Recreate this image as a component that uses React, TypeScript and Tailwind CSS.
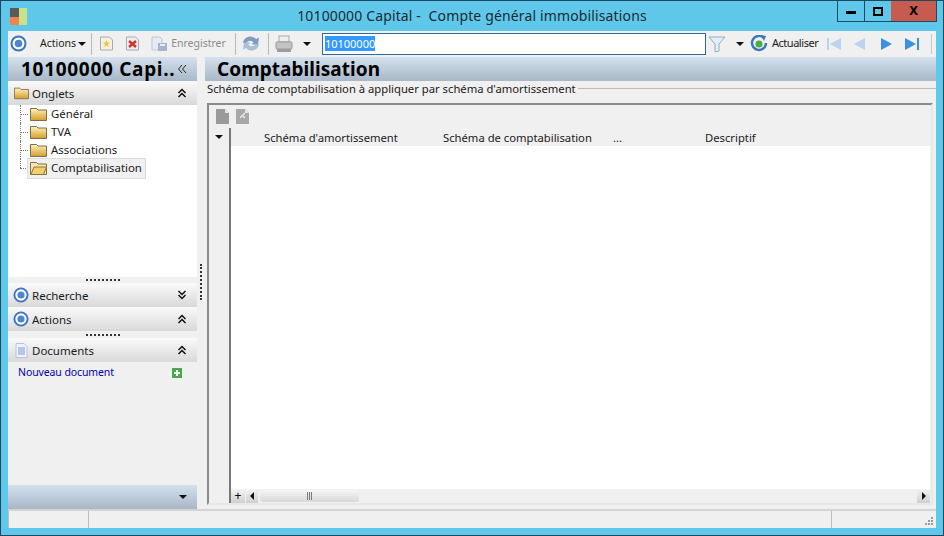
import React from "react";

const font = { fontFamily: '"Noto Sans", "Open Sans", sans-serif' };

const Target = ({ size = 17 }: { size?: number }) => (
  <svg width={size} height={size} viewBox="0 0 17 17" className="shrink-0">
    <circle cx="8.5" cy="8.5" r="7" fill="#fff" stroke="#3f74b8" strokeWidth="2" />
    <circle cx="8.5" cy="8.5" r="3.8" fill="#4a86cf" />
  </svg>
);

const Folder = ({ open = false, large = false }: { open?: boolean; large?: boolean }) => (
  <svg width={large ? 15 : 17} height="14" viewBox="0 0 17 14" className="shrink-0">
    <defs>
      <linearGradient id="fg" x1="0" y1="0" x2="0" y2="1">
        <stop offset="0" stopColor="#fff3b8" />
        <stop offset="1" stopColor="#d79c2c" />
      </linearGradient>
    </defs>
    <path d="M.5 13.5V1.5h6L8 3h8.5v10.5z" fill={open ? "#f7e7ae" : "url(#fg)"} stroke="#7b6f50" strokeWidth="1" />
    {open && <path d="M.8 13.5 4 6h12.5l-3 7.5z" fill="#f4cf6b" stroke="#8b7440" strokeWidth="1" />}
  </svg>
);

const Chev = ({ up = true }: { up?: boolean }) => (
  <svg width="10" height="10" viewBox="0 0 10 10" className="shrink-0">
    <path
      d={up ? "M1.5 5 5 1.5 8.5 5M1.5 9 5 5.5 8.5 9" : "M1.5 1 5 4.5 8.5 1M1.5 5 5 8.5 8.5 5"}
      fill="none"
      stroke="#111"
      strokeWidth="1.5"
    />
  </svg>
);

const Caret = ({ className = "" }: { className?: string }) => (
  <svg width="8" height="4" viewBox="0 0 8 4" className={"shrink-0 " + className}>
    <path d="M0 0h8L4 4z" fill="#111" />
  </svg>
);

const Sep = () => <div className="h-[22px] w-px bg-[#b9b9b9] mx-[4px] shrink-0" />;

const Grip = ({ tall = false }: { tall?: boolean }) => (
  <div className={(tall ? "h-[7px]" : "h-[6px]") + " shrink-0 flex justify-center items-center bg-[#f0f0f0] gap-[2px]"}>
    {Array.from({ length: 9 }).map((_, i) => (
      <span key={i} className="w-[2px] h-[2px] bg-[#333]" />
    ))}
  </div>
);

const SectionHeader = ({
  icon,
  label,
  up = true,
}: {
  icon: React.ReactNode;
  label: string;
  up?: boolean;
}) => (
  <div className="h-[24px] flex items-center pl-[4px] pr-[10px] bg-gradient-to-b from-[#fafafa] to-[#d9d9d9] shrink-0">
    <div className="w-[18px] flex justify-center">{icon}</div>
    <span className="ml-[2px] pt-[2px] text-[11.5px] text-[#1a1a1a] flex-1">{label}</span>
    <Chev up={up} />
  </div>
);

const TreeRow = ({ label, selected = false, last = false }: { label: string; selected?: boolean; last?: boolean }) => (
  <div className="h-[18px] flex items-center relative">
    <div className={"absolute left-[12px] top-0 w-0 border-l border-dotted border-[#777] " + (last ? "h-[9px]" : "h-[18px]")} />
    <div className="ml-[12px] w-[8px] border-t border-dotted border-[#777]" />
    <div
      className={
        "h-[19px] flex items-center pl-[2px] pr-[3px] " +
        (selected ? "bg-[#f0f0f0] outline outline-1 outline-[#dcdcdc]" : "")
      }
    >
      <Folder open={selected} />
      <span className="ml-[4px] text-[11.4px] leading-[18px] text-[#1a1a1a]">{label}</span>
    </div>
  </div>
);

const Doc = ({ tone = "#9a9a9a", mark = false }: { tone?: string; mark?: boolean }) => (
  <svg width="13" height="15" viewBox="0 0 13 15" className="shrink-0">
    <path d="M0 0h9l4 4v11H0z" fill={tone} />
    <path d="M9 0l4 4H9z" fill="#e4e4e4" />
    {mark && <path d="M4 9l5-5M9 9 6 6" stroke="#eee" strokeWidth="1.2" />}
  </svg>
);

const Nav = ({ kind, active }: { kind: "first" | "prev" | "next" | "last"; active: boolean }) => {
  const c = active ? "#3d8fe6" : "#b9d4ef";
  return (
    <svg width="16" height="16" viewBox="0 0 16 16" className="shrink-0">
      {kind === "first" && <path d="M1 2h2v12H1zM15 2v12L4 8z" fill={c} />}
      {kind === "prev" && <path d="M13 2v12L2 8z" fill={c} />}
      {kind === "next" && <path d="M3 2v12l11-6z" fill={c} />}
      {kind === "last" && <path d="M1 2v12l11-6zM13 2h2v12h-2z" fill={c} />}
    </svg>
  );
};

export default function App() {
  return (
    <div
      style={font}
      className="w-[944px] h-[536px] overflow-hidden bg-[#5fc8ea] border border-[#1c4a5c] flex flex-col"
    >
      {/* Title bar */}
      <div className="h-[30px] shrink-0 flex items-start relative">
        <div className="ml-[9px] mt-[7px] w-[17px] h-[17px] grid grid-cols-2 grid-rows-2">
          <span className="bg-[#5a5a5a]" />
          <span className="bg-[#c9e28a] row-span-2" />
          <span className="bg-[#f0854a]" />
        </div>
        <div className="flex-1 pl-[80px] text-center text-[14px] tracking-[0.14px] leading-[30px] text-[#1a2a33] whitespace-pre">
          10100000 Capital -  Compte général immobilisations
        </div>
        <div className="flex h-[21px] mr-[6px] border border-t-0 border-[#1c4a5c]">
          <div className="w-[27px] flex items-center justify-center border-r border-[#1c4a5c]">
            <span className="w-[10px] h-[3px] bg-black mt-[2px]" />
          </div>
          <div className="w-[26px] flex items-center justify-center">
            <span className="w-[10px] h-[9px] border-2 border-black" />
          </div>
          <div className="w-[45px] flex items-center justify-center bg-[#c75b50] text-[13px] font-bold text-black">
            X
          </div>
        </div>
      </div>

      {/* Window body */}
      <div className="mx-[7px] mb-[7px] flex-1 flex flex-col bg-[#f0f0f0] min-h-0">
        {/* Toolbar */}
        <div className="h-[25px] shrink-0 flex items-center pl-[2px] text-[10.5px] text-[#1a1a1a]">
          <Target />
          <span className="ml-[13px]">Actions</span>
          <Caret className="ml-[2px]" />
          <div className="ml-[1px]"><Sep /></div>
          <svg width="15" height="15" viewBox="0 0 15 15" className="ml-[3px] shrink-0">
            <path d="M1.5 1h9l3 3v10h-12z" fill="#f4f1dc" stroke="#a9a9b8" />
            <path d="M7.5 4l1 2.5 2.5.2-2 1.6.7 2.6-2.2-1.4-2.2 1.4.7-2.6-2-1.6 2.5-.2z" fill="#f0c53a" />
          </svg>
          <svg width="15" height="15" viewBox="0 0 15 15" className="ml-[11px] shrink-0">
            <path d="M1.5 1h9l3 3v10h-12z" fill="#eee" stroke="#a9a9b8" />
            <path d="M4 5l7 6M11 5l-7 6" stroke="#d8302a" strokeWidth="2.4" />
          </svg>
          <svg width="17" height="16" viewBox="0 0 17 16" className="ml-[11px] shrink-0">
            <path d="M1 1h8l2 2v11H1z" fill="#e4e9f2" stroke="#c0c6d2" />
            <rect x="7" y="7" width="9" height="8" fill="#a4b4cc" />
            <rect x="9" y="8" width="5" height="2" fill="#e8edf5" />
          </svg>
          <span className="ml-[3px] text-[#8a8a8a]">Enregistrer</span>
          <div className="ml-[5px]"><Sep /></div>
          <svg width="18" height="17" viewBox="0 0 18 17" className="ml-[2px] shrink-0">
            <path d="M1 8a7.5 7.5 0 0 1 13-4l3-1.500-1 7h-6.500l2-2a4 4 0 0 0-7 .5z" fill="#7f9cbc" />
            <path d="M17 9a7.500 7.500 0 0 1-13 4l-3 1.500 1-7h6.500l-2 2a4 4 0 0 0 7-.5z" fill="#a9bfd6" />
          </svg>
          <div className="ml-[4px]"><Sep /></div>
          <svg width="18" height="18" viewBox="0 0 18 18" className="ml-[2px] shrink-0">
            <rect x="4" y="1" width="10" height="6" fill="#eee" stroke="#aaa" />
            <rect x="1" y="7" width="16" height="7" rx="1" fill="#c4c4c4" stroke="#999" />
            <rect x="2" y="14" width="14" height="3" fill="#9d9d9d" />
          </svg>
          <Caret className="ml-[10px]" />
          <div className="w-[384px] h-[22px] ml-[11px] border border-[#2f6b9a] bg-white flex items-center pl-[2px] text-[11px] leading-none">
            <span className="bg-[#3399ff] text-white h-[15px] flex items-center">10100000</span>
          </div>
          <svg width="18" height="18" viewBox="0 0 18 18" className="ml-[2px] shrink-0">
            <path d="M1 2h16l-6 7v7l-4 1V9z" fill="#e3eff8" stroke="#93acc0" />
          </svg>
          <Caret className="ml-[10px]" />
          <svg width="18" height="18" viewBox="0 0 18 18" className="ml-[6px] shrink-0">
            <path d="M14 3a7 7 0 1 0 2 5" fill="none" stroke="#3f74b8" strokeWidth="2.4" />
            <path d="M11 0l5 1-2 5z" fill="#3f74b8" />
            <circle cx="9" cy="9" r="3.6" fill="#45b04a" />
          </svg>
          <span className="ml-[4px] text-[11px] tracking-[-0.45px]">Actualiser</span>
          <div className="ml-[8px] flex gap-[10px]">
            <Nav kind="first" active={false} />
            <Nav kind="prev" active={false} />
            <Nav kind="next" active />
            <Nav kind="last" active />
          </div>
          <div className="ml-[11px] h-[20px] w-px bg-[#c8c8c8]" />
        </div>

        {/* Main */}
        <div className="flex-1 flex min-h-0 mt-px">
          {/* Left */}
          <div className="w-[189px] shrink-0 flex flex-col">
            <div className="h-[24px] shrink-0 flex items-center pl-[13px] pr-[10px] bg-gradient-to-b from-[#d5e1ee] to-[#a8b8c8]">
              <span className="flex-1 text-[19px] tracking-[0.7px] font-bold text-black whitespace-nowrap leading-none">10100000 Capi..</span>
              <svg width="10" height="10" viewBox="0 0 10 10" className="shrink-0">
                <path d="M5 1 1.500 5 5 9M9 1 5.500 5 9 9" fill="none" stroke="#222" strokeWidth="1" />
              </svg>
            </div>
            <SectionHeader icon={<Folder large />} label="Onglets" />
            <div className="h-[172px] shrink-0 bg-white">
              <TreeRow label="Général" />
              <TreeRow label="TVA" />
              <TreeRow label="Associations" />
              <TreeRow label="Comptabilisation" selected last />
            </div>
            <Grip />
            <SectionHeader icon={<Target size={16} />} label="Recherche" up={false} />
            <SectionHeader icon={<Target size={16} />} label="Actions" />
            <Grip tall />
            <SectionHeader
              icon={
                <svg width="13" height="15" viewBox="0 0 13 15">
                  <path d="M1 .5h8l3 3v11H1z" fill="#eef2fa" stroke="#b8c2d8" />
                  <path d="M3 5h7M3 7h7M3 9h7M3 11h7" stroke="#7e9ccc" />
                </svg>
              }
              label="Documents"
            />
            <div className="flex-1 min-h-0 flex items-start pt-[3px] pl-[10px] pr-[15px] justify-between">
              <span className="text-[10.5px] text-[#0000a8] tracking-[-0.1px]">Nouveau document</span>
              <svg width="10" height="10" viewBox="0 0 10 10" className="mt-[3px] shrink-0">
                <rect width="10" height="10" fill="#4aa84a" />
                <path d="M2 5h6M5 2v6" stroke="#fff" strokeWidth="2" />
              </svg>
            </div>
            <div className="h-[24px] shrink-0 flex items-center justify-end pr-[10px] bg-gradient-to-b from-[#d3e1ef] to-[#a8b6c6]">
              <Caret />
            </div>
          </div>

          {/* Splitter */}
          <div className="w-[8px] shrink-0 flex items-center justify-center">
            <div className="mt-[-2px] h-[36px] border-l-2 border-dotted border-[#333]" />
          </div>

          {/* Right */}
          <div className="flex-1 min-w-0 flex flex-col">
            <div className="h-[24px] shrink-0 flex items-center pl-[12px] bg-gradient-to-b from-[#d5e1ee] to-[#a8b8c8]">
              <span className="text-[19px] tracking-[0.05px] font-bold text-black leading-none">Comptabilisation</span>
            </div>
            <div className="h-[15px] shrink-0 flex items-center pl-[2px]">
              <span className="text-[11.25px] text-[#1a1a1a] whitespace-nowrap leading-none">
                Schéma de comptabilisation à appliquer par schéma d'amortissement
              </span>
              <div className="flex-1 ml-[2px] h-px bg-[#bcbcbc]" />
            </div>
            <div className="h-[402px] shrink-0 mt-[7px] ml-[2px] mr-[3px] border-2 border-[#8a8a8a] border-r-[#e8e8e8] border-b-[#e8e8e8] flex flex-col bg-[#f0f0f0]">
              <div className="h-[23px] shrink-0 flex items-center pl-[7px] gap-[7px]">
                <Doc />
                <Doc tone="#a8a8a8" mark />
              </div>
              <div className="flex-1 min-h-0 flex">
                <div className="w-[22px] shrink-0 border-r-2 border-[#777] pt-[7px] pl-[6px]">
                  <Caret />
                </div>
                <div className="flex-1 min-w-0 flex flex-col bg-white mr-px">
                  <div className="h-[18px] shrink-0 bg-[#f0f0f0] flex items-center pt-[2px] text-[11.25px] text-[#1a1a1a] whitespace-nowrap">
                    <span className="ml-[33px] w-[179px]">Schéma d'amortissement</span>
                    <span className="w-[170px]">Schéma de comptabilisation</span>
                    <span className="w-[92px]">...</span>
                    <span>Descriptif</span>
                  </div>
                  <div className="flex-1" />
                  <div className="h-[14px] shrink-0 bg-[#f0f0f0] flex items-center">
                    <div className="w-[14px] h-[14px] flex items-center justify-center bg-gradient-to-b from-[#f4f4f4] to-[#cfcfcf] text-[12px] leading-none">+</div>
                    <div className="ml-[1px] w-[12px] h-[14px] flex items-center justify-center bg-gradient-to-b from-[#f4f4f4] to-[#cfcfcf]">
                      <svg width="4" height="8" viewBox="0 0 4 8"><path d="M4 0v8L0 4z" fill="#111" /></svg>
                    </div>
                    <div className="ml-[2px] w-[99px] h-[12px] rounded-[3px] bg-gradient-to-b from-[#f6f6f6] to-[#d8d8d8] flex items-center justify-center gap-px">
                      <span className="w-px h-[8px] bg-[#777]" />
                      <span className="w-px h-[8px] bg-[#777]" />
                      <span className="w-px h-[8px] bg-[#777]" />
                    </div>
                    <div className="flex-1" />
                    <div className="w-[13px] h-[14px] flex items-center justify-center bg-gradient-to-b from-[#f4f4f4] to-[#cfcfcf]">
                      <svg width="4" height="8" viewBox="0 0 4 8"><path d="M0 0v8l4-4z" fill="#111" /></svg>
                    </div>
                  </div>
                </div>
              </div>
            </div>
          </div>
        </div>

        {/* Status bar */}
        <div className="h-[19px] shrink-0 border-t-2 border-[#d4d4d4] flex relative">
          <div className="w-[81px] border-l border-r border-[#bdbdbd]" />
          <div className="flex-1 border-r border-[#bdbdbd]" />
          <div className="w-[104px] relative">
            <div className="absolute right-[3px] bottom-[3px] grid grid-cols-3 gap-px w-[8px]">
              {[0, 0, 1, 0, 1, 1, 1, 1, 1].map((v, i) => (
                <span key={i} className={"w-[2px] h-[2px] " + (v ? "bg-[#9a9a9a]" : "")} />
              ))}
            </div>
          </div>
        </div>
      </div>
    </div>
  );
}
